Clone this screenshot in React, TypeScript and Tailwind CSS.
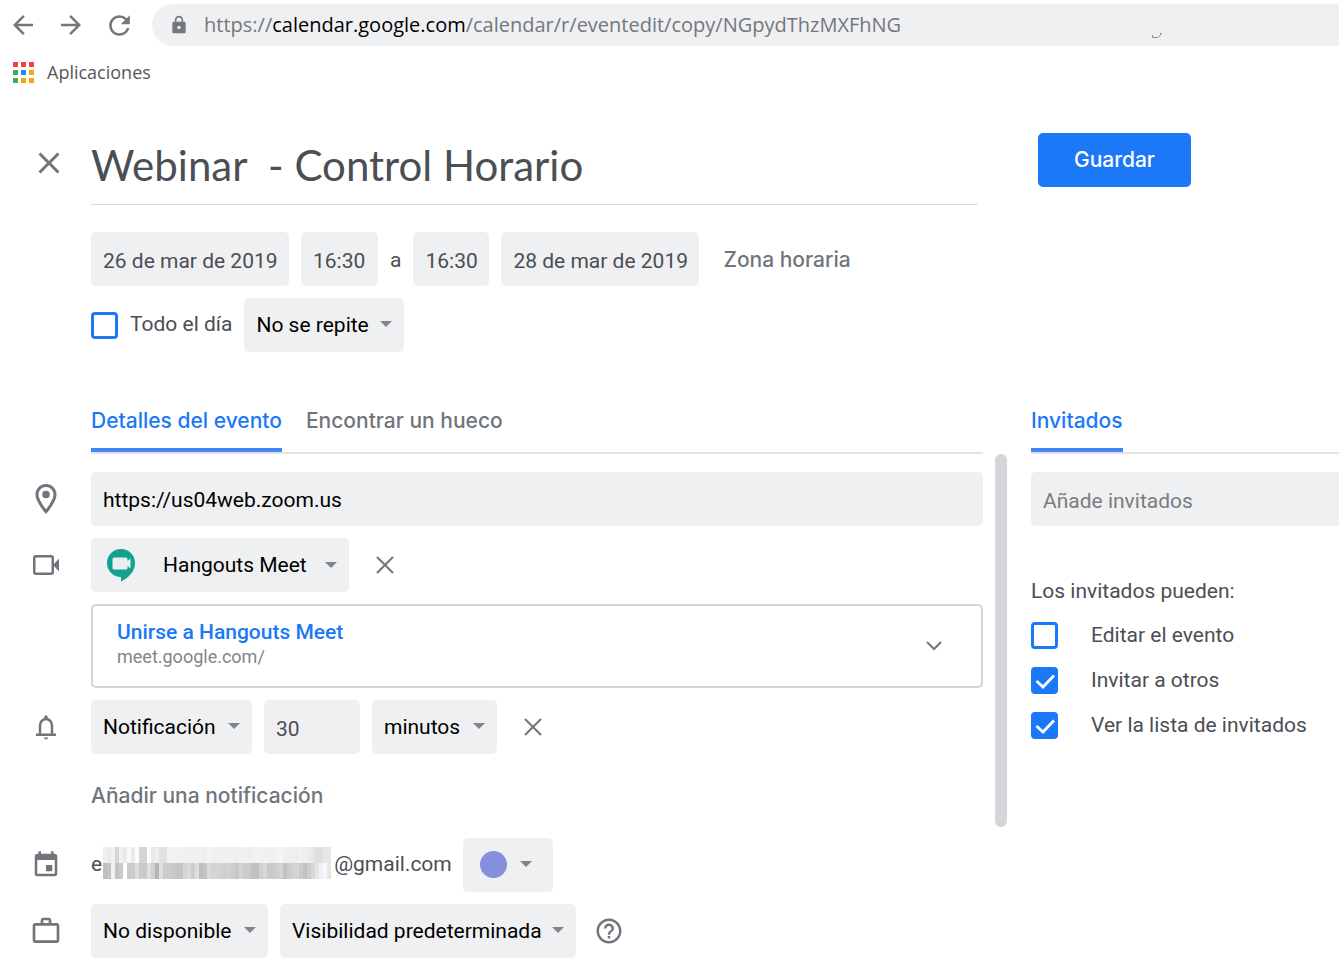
import type { ReactNode } from "react";
import {
  MdArrowBack,
  MdArrowForward,
  MdClose,
  MdEvent,
  MdHelpOutline,
  MdLock,
  MdOutlineLocationOn,
  MdRefresh,
  MdWorkOutline,
} from "react-icons/md";

const apps = [
  "#f4433c", "#f4433c", "#f4433c",
  "#3cab5c", "#1e88fb", "#f7a60a",
  "#3cab5c", "#f7a60a", "#f7a60a",
];

// grey levels of the hidden part of the address, one per 4px column
const maskTop = [
  240, 236, 241, 213, 241, 233, 248, 234, 253, 213, 213, 253, 232, 238, 226, 226, 242, 242, 241,
  241, 240, 239, 240, 240, 239, 238, 243, 240, 241, 239, 240, 240, 239, 238, 240, 241, 238, 240,
  243, 242, 241, 240, 241, 243, 246, 241, 240, 239, 239, 241, 238, 236, 230, 222, 222, 232, 230,
];
const maskBottom = [
  192, 196, 240, 194, 202, 254, 202, 204, 220, 202, 202, 224, 208, 180, 222, 204, 204, 202, 196,
  196, 212, 218, 206, 222, 190, 196, 218, 212, 212, 210, 208, 210, 204, 200, 212, 204, 202, 192,
  192, 208, 216, 202, 202, 206, 212, 192, 204, 210, 212, 204, 194, 204, 216, 228, 242, 248, 230,
];

const guestOptions = [
  { id: "edit", label: "Editar el evento", checked: false },
  { id: "invite", label: "Invitar a otros", checked: true },
  { id: "list", label: "Ver la lista de invitados", checked: true },
];

function Cross() {
  return (
    <svg width="18" height="18" viewBox="0 0 18 18" fill="none" aria-hidden>
      <path d="M1 1l16 16M17 1L1 17" stroke="#70757c" strokeWidth="2" />
    </svg>
  );
}

function Caret() {
  return (
    <svg width="12" height="6" viewBox="0 0 12 6" aria-hidden>
      <path d="M0 0h12L6 6z" fill="#80858b" />
    </svg>
  );
}

function VideoIcon() {
  return (
    <svg width="26" height="22" viewBox="0 0 26 22" fill="none" aria-hidden>
      <rect x="1.250" y="2.250" width="18.500" height="17.500" rx="1.500" stroke="currentColor" strokeWidth="2.500" />
      <path d="M20 11l6-6.500v13z" fill="currentColor" />
    </svg>
  );
}

function BellIcon() {
  return (
    <svg width="20" height="25" viewBox="0 0 20 25" fill="none" aria-hidden>
      <path d="M4 19V10.500a6 6.500 0 0 1 12 0V19" stroke="currentColor" strokeWidth="2.500" />
      <path d="M0 18.500h20V21H0zM8 22.500h4a2 2 0 0 1-4 0zM8.300 4V2a1.700 1.700 0 0 1 3.400 0v2z" fill="currentColor" />
    </svg>
  );
}

function Dropdown({ label, value, width, children }: { label: string; value: string; width: string; children?: ReactNode }) {
  return (
    <div className={`grid h-[54px] items-center rounded-[5px] bg-[#eff0f2] ${width}`}>
      <select
        aria-label={label}
        className={`col-start-1 row-start-1 h-full w-full appearance-none rounded-[5px] bg-transparent pt-0.5 pr-3 text-black ${
          children ? "pl-[72px]" : "pl-3"
        }`}
      >
        <option>{value}</option>
      </select>
      <span
        className={`pointer-events-none col-start-1 row-start-1 flex items-center justify-between px-3 ${
          children ? "" : "pb-0.5"
        }`}
      >
        <span>{children}</span>
        <Caret />
      </span>
    </div>
  );
}

function Field({ label, value, width }: { label: string; value: string; width: string }) {
  return (
    <input
      aria-label={label}
      defaultValue={value}
      className={`h-[54px] rounded-[5px] bg-[#eff0f2] px-3 pt-1 ${width}`}
    />
  );
}

function Checkbox({ id, checked }: { id: string; checked: boolean }) {
  return (
    <span className="grid size-[27px] shrink-0 place-items-center">
      <input
        id={id}
        type="checkbox"
        defaultChecked={checked}
        className="peer col-start-1 row-start-1 size-[27px] appearance-none rounded-[4px] border-3 border-[#1b78f7] checked:bg-[#1b78f7]"
      />
      <svg
        className="pointer-events-none invisible col-start-1 row-start-1 peer-checked:visible"
        width="27"
        height="27"
        viewBox="0 0 27 27"
        fill="none"
        aria-hidden
      >
        <path d="M5.500 14l6.500 6L23 8.500" stroke="#fff" strokeWidth="2.800" />
      </svg>
    </span>
  );
}

function Row({ icon, children }: { icon?: ReactNode; children: ReactNode }) {
  return (
    <div className="flex">
      <div className="flex h-[54px] w-[91px] shrink-0 items-center justify-center text-[#70757c]">{icon}</div>
      <div className="flex min-w-0 flex-1 items-center">{children}</div>
    </div>
  );
}

function BrowserBar() {
  return (
    <header className="font-['Open_Sans',sans-serif]">
      <div className="flex items-center pt-1 text-[#74777c]">
        <div className="flex w-[152px] items-center gap-[18px] pl-2">
          <button aria-label="Atrás"><MdArrowBack size={30} /></button>
          <button aria-label="Adelante"><MdArrowForward size={30} /></button>
          <button aria-label="Recargar"><MdRefresh size={31} /></button>
        </div>
        <div className="flex h-[42px] flex-1 items-center rounded-l-full bg-[#eff0f2] pl-[17px] text-xl">
          <MdLock size={20} />
          <span className="ml-[15px]">
            https://<span className="text-black">calendar.google.com</span>
            /calendar/r/eventedit/copy/NGpydThzMXFhNG
          </span>
          <svg className="mt-[22px] mr-[177px] ml-auto" width="10" height="6" viewBox="0 0 10 6" fill="none" aria-hidden>
            <path d="M.5 2v2.500H6L8.500 2V.5H10" stroke="#8b8e93" />
          </svg>
        </div>
      </div>
      <div className="flex h-[52px] items-center">
        <a href="#apps" className="flex items-center gap-[13px] pl-[13px] text-lg text-[#55585c]">
          <svg width="21" height="21" viewBox="0 0 21 21" aria-hidden>
            {apps.map((color, i) => (
              <rect key={i} x={(i % 3) * 8} y={Math.floor(i / 3) * 8} width="5" height="5" fill={color} />
            ))}
          </svg>
          Aplicaciones
        </a>
      </div>
    </header>
  );
}

export default function App() {
  return (
    <div className="min-h-screen overflow-hidden bg-white pb-4 font-[Roboto,sans-serif] text-[21px] text-[#4b4e53]">
      <BrowserBar />

      <div className="mt-[35px] flex items-start">
        <button aria-label="Cerrar" className="flex h-[60px] w-[91px] shrink-0 items-center justify-center pl-1.5 text-[#70757c]">
          <MdClose size={36} />
        </button>
        <input
          aria-label="Título"
          defaultValue="Webinar  - Control Horario"
          className="h-[72px] min-w-0 flex-1 border-b border-[#d9dadc] pb-2 font-[Lato,sans-serif] text-[42px] whitespace-pre"
        />
        <div className="w-[361px] shrink-0 pl-[60px]">
          <button className="h-[54px] w-[153px] rounded-[5px] bg-[#1b78f7] font-[Inter,sans-serif] font-medium text-white">Guardar</button>
        </div>
      </div>

      <div className="mt-[27px] flex items-center gap-3 pl-[91px]">
        <Field label="Fecha de inicio" value="26 de mar de 2019" width="w-[198px]" />
        <Field label="Hora de inicio" value="16:30" width="w-[77px]" />
        <span className="pt-1">a</span>
        <Field label="Hora de fin" value="16:30" width="w-[76px]" />
        <Field label="Fecha de fin" value="28 de mar de 2019" width="w-[198px]" />
        <button className="ml-3 pt-0.5 font-[Inter,sans-serif] font-medium text-[#70757c]">Zona horaria</button>
      </div>
      <div className="mt-3 flex items-center gap-3 pl-[91px]">
        <Checkbox id="all-day" checked={false} />
        <label htmlFor="all-day">Todo el día</label>
        <Dropdown label="Repetición" value="No se repite" width="w-[160px]" />
      </div>

      <div className="mt-[38px] flex">
        <main className="min-w-0 flex-1">
          <nav className="ml-[91px] flex gap-6 border-b-2 border-[#e1e2e4] font-[Inter,sans-serif] font-medium">
            <button className="h-[62px] rounded-t-[3px] border-b-4 border-[#4285f4] pt-1 text-[#1b78f7]">Detalles del evento</button>
            <button className="h-[62px] border-b-4 border-transparent pt-1 text-[#70757c]">Encontrar un hueco</button>
          </nav>

          <div className="mt-[18px] flex flex-col gap-3">
            <Row icon={<MdOutlineLocationOn size={36} />}>
              <input
                aria-label="Ubicación"
                defaultValue="https://us04web.zoom.us"
                className="h-[54px] w-full rounded-[5px] bg-[#eff0f2] px-3 pt-0.5 text-black"
              />
            </Row>

            <Row icon={<VideoIcon />}>
              <Dropdown label="Videoconferencia" value="Hangouts Meet" width="w-[258px]">
                <svg className="ml-[3px]" width="30" height="34" viewBox="0 0 30 34" aria-hidden>
                  <path d="M15 1a14 14 0 0 1 14 14c0 9-7 15-14 18.500V29a14 14 0 0 1 0-28z" fill="#12a18f" />
                  <path d="M8 9.500h12a1.500 1.500 0 0 1 1.500 1.500v2l3-2.500v10l-3-2.500v2a1.500 1.500 0 0 1-1.500 1.500H8A1.500 1.500 0 0 1 6.500 20v-9A1.500 1.500 0 0 1 8 9.500z" fill="#eceeee" />
                </svg>
              </Dropdown>
              <button aria-label="Quitar videoconferencia" className="ml-[27px]"><Cross /></button>
            </Row>

            <Row>
              <div className="flex h-[84px] w-full items-center justify-between rounded-[5px] border-2 border-[#d3d4da] pr-[39px] pl-6">
                <div className="pb-1">
                  <a href="#meet" className="block leading-[26px] font-medium text-[#1b78f7]">Unirse a Hangouts Meet</a>
                  <span className="block text-lg leading-6 text-[#80858b]">meet.google.com/</span>
                </div>
                <button aria-label="Mostrar detalles">
                  <svg width="16" height="10" viewBox="0 0 16 10" fill="none" aria-hidden>
                    <path d="M1 1l7 7 7-7" stroke="#70757c" strokeWidth="2" />
                  </svg>
                </button>
              </div>
            </Row>

            <Row icon={<BellIcon />}>
              <div className="flex items-center gap-3">
                <Dropdown label="Tipo de aviso" value="Notificación" width="w-[161px]" />
                <Field label="Cantidad" value="30" width="w-[96px]" />
                <Dropdown label="Unidad" value="minutos" width="w-[125px]" />
                <button aria-label="Quitar notificación" className="ml-[15px]"><Cross /></button>
              </div>
            </Row>

            <div className="flex h-[60px] items-center pl-[91px]">
              <button className="font-[Inter,sans-serif] font-medium text-[#70757c]">Añadir una notificación</button>
            </div>

            <Row icon={<MdEvent size={30} />}>
              <span>e</span>
              <svg className="mb-1 ml-px" width="228" height="32" viewBox="0 0 228 32" shapeRendering="crispEdges" aria-hidden>
                {maskTop.map((v, i) => (
                  <rect key={i} x={i * 4} y="0" width="4" height="16" fill={`rgb(${v},${v},${v})`} />
                ))}
                {maskBottom.map((v, i) => (
                  <rect key={i} x={i * 4} y="16" width="4" height="16" fill={`rgb(${v},${v},${v})`} />
                ))}
              </svg>
              <span className="ml-[3px]">@gmail.com</span>
              <button aria-label="Color del evento" className="ml-[11px] flex h-[54px] w-[90px] items-center gap-[13px] rounded-[5px] bg-[#eff0f2] pb-0.5 pl-[17px]">
                <span className="size-[27px] rounded-full bg-[#8490db]" />
                <Caret />
              </button>
            </Row>

            <Row icon={<MdWorkOutline size={32} />}>
              <div className="flex items-center gap-3">
                <Dropdown label="Disponibilidad" value="No disponible" width="w-[177px]" />
                <Dropdown label="Visibilidad" value="Visibilidad predeterminada" width="w-[296px]" />
                <button aria-label="Ayuda" className="ml-[6px] text-[#70757c]"><MdHelpOutline size={30} /></button>
              </div>
            </Row>
          </div>
        </main>

        <div className="mt-[64px] mr-6 ml-3 h-[373px] w-3 shrink-0 rounded-full bg-[#d5d6da]" />

        <aside className="w-[308px] shrink-0">
          <div className="flex border-b-2 border-[#e1e2e4] font-[Inter,sans-serif] font-medium">
            <button className="h-[62px] rounded-t-[3px] border-b-4 border-[#4285f4] pt-1 text-[#1b78f7]">Invitados</button>
          </div>
          <input
            aria-label="Añade invitados"
            placeholder="Añade invitados"
            className="mt-[18px] h-[54px] w-full rounded-l-[5px] bg-[#eff0f2] px-3 pt-1 placeholder:text-[#7b7c7e]"
          />
          <fieldset className="mt-[50px]">
            <legend className="h-[31px]">Los invitados pueden:</legend>
            <div className="mt-[15px] flex flex-col gap-[18px]">
              {guestOptions.map((o) => (
                <div key={o.id} className="flex h-[27px] items-center gap-[33px]">
                  <Checkbox id={o.id} checked={o.checked} />
                  <label htmlFor={o.id}>{o.label}</label>
                </div>
              ))}
            </div>
          </fieldset>
        </aside>
      </div>
    </div>
  );
}
